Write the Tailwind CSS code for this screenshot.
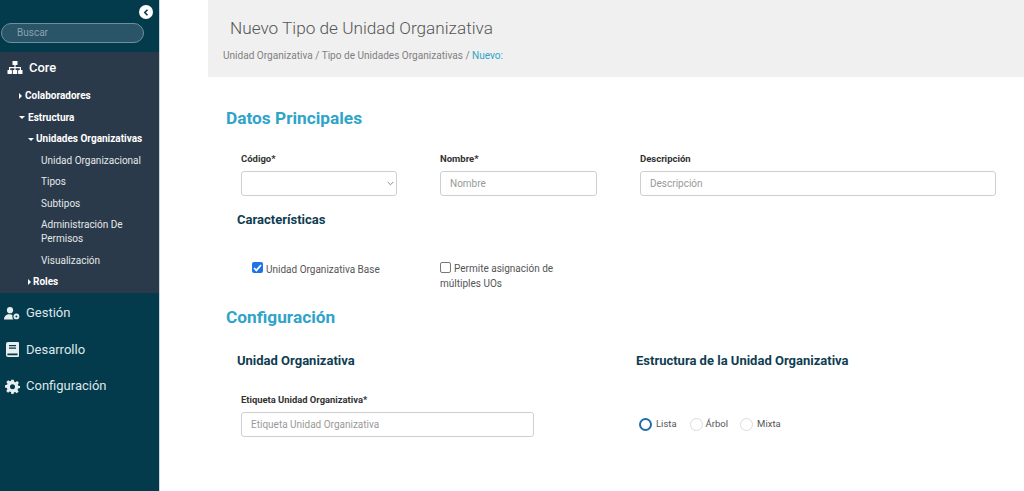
<!DOCTYPE html>
<html lang="es">
<head>
    <meta charset="UTF-8">
    <title>Nuevo Tipo de Unidad Organizativa</title>
    <script src="https://cdn.jsdelivr.net/npm/@tailwindcss/browser@4"></script>
</head>
<body class="bg-white font-['Roboto',sans-serif] overflow-hidden">
<div class="flex h-[491px] w-[1024px]">
    <!-- Sidebar -->
    <aside class="w-[160px] shrink-0 bg-[#033a4c] border-r border-[#c9d6dc] relative">
        <button class="absolute left-[139px] top-[5px] w-[14px] h-[14px] rounded-full bg-white flex items-center justify-center">
            <svg width="6" height="7" viewBox="0 0 6 7" fill="none" stroke="#033a4c" stroke-width="1.6"><path d="M4.5 0.8 1.8 3.5l2.7 2.7"/></svg>
        </button>
        <div class="h-[52px] pt-[23px] pl-px">
            <div class="w-[143px] h-[20px] rounded-full bg-[#2a5468] border border-[#6d8f9e] pl-[15px] text-[10px] leading-[18px] text-[#8aa2ae]">Buscar</div>
        </div>

        <!-- Core -->
        <div class="bg-[#2b3a4a] h-[241px] text-white">
            <div class="flex items-center h-[30px] pt-[1px] pl-[7px] gap-[6px]">
                <svg width="16" height="13" viewBox="0 0 16 13" fill="#fff"><rect x="5.5" y="0" width="5" height="4" rx=".6"/><rect x="0.5" y="9" width="4.4" height="4" rx=".6"/><rect x="5.8" y="9" width="4.4" height="4" rx=".6"/><rect x="11.1" y="9" width="4.4" height="4" rx=".6"/><path d="M7.4 4h1.2v2H14v3h-1.2V7.2H8.6V9H7.4V7.2H3.2V9H2V6h5.4z"/></svg>
                <span class="text-[13px] font-medium">Core</span>
            </div>
            <ul class="text-[10px] leading-[14px] mt-[3px]">
                <li class="h-[22px] pl-[19px] font-bold flex items-center gap-[3px]"><span class="w-0 h-0 border-y-[3px] border-y-transparent border-l-[3px] border-l-white"></span>Colaboradores</li>
                <li class="h-[21px] pl-[19px] font-bold flex items-center gap-[3px]"><span class="w-0 h-0 border-x-[3px] border-x-transparent border-t-[3px] border-t-white"></span>Estructura</li>
                <li class="h-[22px] pl-[28px] font-bold flex items-center gap-[2px]"><span class="w-0 h-0 border-x-[3px] border-x-transparent border-t-[3px] border-t-white"></span>Unidades Organizativas</li>
                <li class="h-[21px] pl-[41px] flex items-center text-[#e4e8eb]">Unidad Organizacional</li>
                <li class="h-[22px] pl-[41px] flex items-center text-[#e4e8eb]">Tipos</li>
                <li class="h-[21px] pl-[41px] flex items-center text-[#e4e8eb]">Subtipos</li>
                <li class="h-[36px] pl-[41px] flex items-center text-[#e4e8eb] leading-[14.5px]">Administración De<br>Permisos</li>
                <li class="h-[21px] pl-[41px] flex items-center text-[#e4e8eb]">Visualización</li>
                <li class="h-[22px] pl-[28px] font-bold flex items-center gap-[2px]"><span class="w-0 h-0 border-y-[3px] border-y-transparent border-l-[3px] border-l-white"></span>Roles</li>
            </ul>
        </div>

        <!-- Resto del menu -->
        <ul class="text-[13px] text-[#dfe6e9] pt-[2px]">
            <li class="h-[36px] flex items-center pl-[4px] gap-[6px]">
                <svg width="16" height="13" viewBox="0 0 16 13" fill="#e8edef"><circle cx="6" cy="3.2" r="3.1"/><path d="M0 12.6c0-3.3 2.2-5.3 5.6-5.3 1.2 0 2 .2 2.8.6-.2 1.6 0 3.5 1.2 4.7z"/><circle cx="12.4" cy="9.4" r="2.9"/><circle cx="12.4" cy="9.4" r="1" fill="#033a4c"/></svg>
                <span>Gestión</span>
            </li>
            <li class="h-[37px] flex items-center pl-[6px] gap-[7px]">
                <svg width="13" height="15" viewBox="0 0 13 15"><path fill="#e8edef" d="M2 0h10a1 1 0 0 1 1 1v13a1 1 0 0 1-1 1H2a2 2 0 0 1-2-2V2a2 2 0 0 1 2-2z"/><path fill="#033a4c" d="M3 3h7v1.2H3zM3 5.6h7v1.2H3zM1.4 11.6h10.2v1.6H1.4z"/></svg>
                <span>Desarrollo</span>
            </li>
            <li class="h-[36px] flex items-center pl-[5px] gap-[6px]">
                <svg width="15" height="15" viewBox="0 0 24 24" fill="#e8edef"><path fill-rule="evenodd" d="M10 1h4l.7 3.2 1.9.8L19.4 3.2l2.8 2.8-1.8 2.8.8 1.9L24 11v3.4l-3.2.7-.8 1.9 1.8 2.8-2.8 2.8-2.8-1.8-1.9.8L13.6 24h-3.4l-.7-3.2-1.9-.8-2.8 1.8-2.8-2.8 1.8-2.8-.8-1.9L0 13.6V10l3.2-.7.8-1.9-1.8-2.8 2.8-2.8 2.8 1.8 1.9-.8zM12 8.2a4 4 0 1 0 0 8 4 4 0 0 0 0-8z"/></svg>
                <span>Configuración</span>
            </li>
        </ul>
    </aside>

    <!-- Contenido -->
    <main class="flex-1 pl-[48px]">
        <header class="h-[77px] bg-[#f0f0f0] pl-[15px] pt-[17px]">
            <h1 class="pl-[7px] text-[17.2px] leading-[22px] font-light text-[#555]">Nuevo Tipo de Unidad Organizativa</h1>
            <p class="mt-[10px] text-[10.07px] leading-[14px] text-[#808080]">Unidad Organizativa / Tipo de Unidades Organizativas / <span class="text-[#2fa4c9]">Nuevo:</span></p>
        </header>

        <section class="pl-[18px] pt-[30px]">
            <h2 class="text-[17.3px] leading-[22px] font-bold text-[#2fa4c9]">Datos Principales</h2>

            <div class="flex pl-[15px] mt-[23px] text-[9.5px] font-bold text-[#333]">
                <div class="w-[156px] mr-[43px]">
                    <label class="block leading-[14px] mb-[5px]">Código*</label>
                    <div class="h-[25px] border border-[#cfcfcf] rounded-[3px] bg-white flex items-center justify-end pr-[2px]">
                        <svg width="7" height="5" viewBox="0 0 7 5" fill="none" stroke="#888" stroke-width="1"><path d="M.7 1l2.8 2.8L6.3 1"/></svg>
                    </div>
                </div>
                <div class="w-[157px] mr-[43px]">
                    <label class="block leading-[14px] mb-[5px]">Nombre*</label>
                    <div class="h-[25px] border border-[#cfcfcf] rounded-[3px] pl-[9px] text-[10px] leading-[23px] font-normal text-[#999]">Nombre</div>
                </div>
                <div class="w-[356px]">
                    <label class="block leading-[14px] mb-[5px]">Descripción</label>
                    <div class="h-[25px] border border-[#cfcfcf] rounded-[3px] pl-[9px] text-[10px] leading-[23px] font-normal text-[#999]">Descripción</div>
                </div>
            </div>

            <h3 class="pl-[11px] mt-[15px] text-[13px] leading-[18px] font-bold text-[#0f3d52]">Características</h3>

            <div class="flex mt-[32px] pl-[26px] text-[10px] leading-[15px] text-[#555]">
                <label class="w-[188px] flex items-start gap-[3px]">
                    <span class="mt-[1px] w-[11px] h-[11px] rounded-[2px] bg-[#1f73e8] flex items-center justify-center">
                        <svg width="9" height="8" viewBox="0 0 9 8" fill="none" stroke="#fff" stroke-width="1.7"><path d="M1 4l2.4 2.4L8 1"/></svg>
                    </span>
                    <span class="pt-[1px]">Unidad Organizativa Base</span>
                </label>
                <label class="w-[125px] block">
                    <span class="inline-block align-[-1px] w-[11px] h-[11px] rounded-[2px] border border-[#777] bg-white mr-[3px]"></span>Permite asignación de múltiples UOs
                </label>
            </div>

            <h2 class="mt-[15px] text-[17.3px] leading-[22px] font-bold text-[#2fa4c9]">Configuración</h2>

            <div class="flex pl-[11px] mt-[24px]">
                <div class="w-[399px]">
                    <h3 class="text-[13px] leading-[18px] font-bold text-[#0f3d52]">Unidad Organizativa</h3>
                    <label class="block ml-[4px] mt-[23px] text-[9.4px] leading-[14px] font-bold text-[#333]">Etiqueta Unidad Organizativa*</label>
                    <div class="ml-[4px] mt-[5px] w-[293px] h-[25px] border border-[#cfcfcf] rounded-[3px] pl-[9px] text-[10px] leading-[23px] text-[#999]">Etiqueta Unidad Organizativa</div>
                </div>
                <div>
                    <h3 class="text-[13px] leading-[18px] font-bold text-[#0f3d52]">Estructura de la Unidad Organizativa</h3>
                    <div class="flex items-center mt-[47px] pl-[3px] text-[9.5px] text-[#555] leading-[14px]">
                        <span class="w-[13px] h-[13px] rounded-full border-2 border-[#1f6ea8] mr-[4px]"></span><span class="mr-[13px]">Lista</span>
                        <span class="w-[13px] h-[13px] rounded-full border border-[#dcdcdc] mr-[3px]"></span><span class="mr-[12px]">Árbol</span>
                        <span class="w-[13px] h-[13px] rounded-full border border-[#dcdcdc] mr-[4px]"></span><span>Mixta</span>
                    </div>
                </div>
            </div>
        </section>
    </main>
</div>
</body>
</html>
